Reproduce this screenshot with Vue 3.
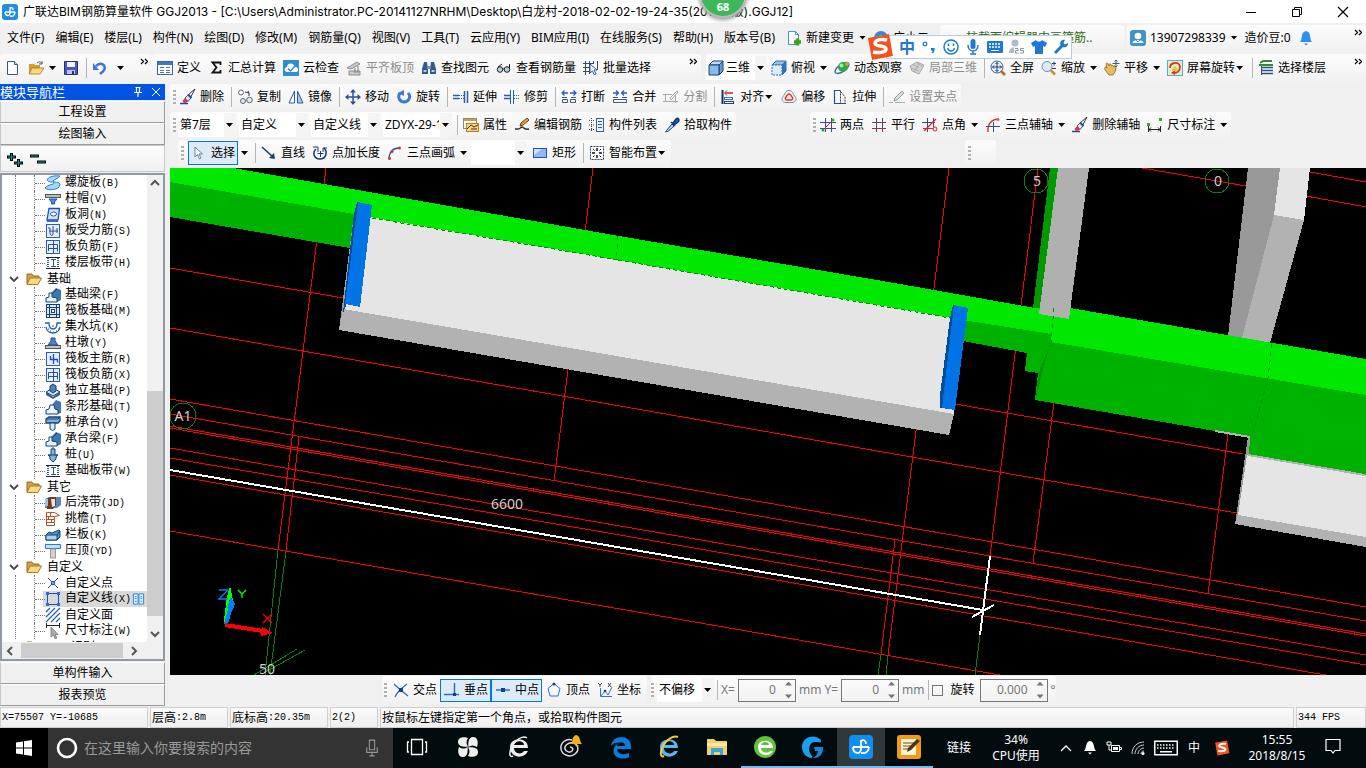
<template>
  <div class="app">
    <header class="titlebar">
      <svg class="ico" viewBox="0 0 16 16" v-html="icons.app"></svg>
      <h1 class="title">广联达BIM钢筋算量软件 GGJ2013 - [C:\Users\Administrator.PC-20141127NRHM\Desktop\白龙村-2018-02-02-19-24-35(2018新版).GGJ12]</h1>
      <div class="window-buttons">
        <button v-for="b in ['minimize', 'restore', 'close']" :key="b" :aria-label="b">
          <svg class="ico" viewBox="0 0 16 16" v-html="icons[b]"></svg>
        </button>
      </div>
      <div class="speed-ball">68</div>
    </header>

    <nav class="menubar">
      <button v-for="m in menus" :key="m" class="menu">{{ m }}</button>
      <button class="tool menu-new">
        <svg class="ico" viewBox="0 0 16 16" v-html="icons.newChange"></svg>新建变更<i class="caret"></i>
      </button>
      <button class="tool menu-helper">
        <svg class="ico" viewBox="0 0 16 16" v-html="icons.helper"></svg>广小二
      </button>
      <a class="strip menu-tip" href="#">柱截面编辑器中画箍筋..</a>
      <div class="strip menu-account">
        <button class="tool"><svg class="ico" viewBox="0 0 16 16" v-html="icons.user"></svg>13907298339<i class="caret"></i></button>
        <button class="tool">造价豆:0</button>
        <button class="tool" aria-label="消息"><svg class="ico" viewBox="0 0 16 16" v-html="icons.bell"></svg></button>
        <svg class="more" viewBox="0 0 8 7" v-html="icons.more"></svg>
      </div>

      <!-- Input method bar floats over the menu -->
      <div class="ime">
        <svg class="ime-logo" viewBox="0 0 28 28" v-html="icons.sogou"></svg>
        <div class="ime-keys">
          <span class="ime-zh">中</span>
          <svg v-for="k in imeIcons" :key="k" class="ime-ico" viewBox="0 0 16 16" v-html="icons[k]"></svg>
        </div>
      </div>
    </nav>

    <div class="main-tools">
      <div v-for="(strip, s) in mainStrips" :key="s" class="strip" :class="strip.cls">
        <template v-for="(t, i) in strip.items" :key="i">
          <span v-if="t.sep" class="sep"></span>
          <label v-else-if="t.combo !== undefined" class="combo" :class="t.cls">
            <svg v-if="t.icon" class="ico" viewBox="0 0 16 16" v-html="icons[t.icon]"></svg>
            <select :aria-label="t.name"><option>{{ t.combo }}</option></select>
          </label>
          <button v-else class="tool" :class="{ wide: t.wide }" :disabled="t.off" :aria-label="t.name">
            <svg class="ico" viewBox="0 0 16 16" v-html="icons[t.icon]"></svg>{{ t.label }}<i v-if="t.caret" class="caret" :class="{ tight: t.tight }"></i>
          </button>
        </template>
        <svg class="more" viewBox="0 0 8 7" v-html="icons.more"></svg>
      </div>
    </div>

    <div class="body">
      <aside class="sidebar">
        <div class="dock-title">
          <span>模块导航栏</span>
          <svg class="dock-ico" viewBox="0 0 12 12" v-html="icons.pin"></svg>
          <svg class="dock-ico" viewBox="0 0 12 12" v-html="icons.dockClose"></svg>
        </div>
        <button class="module">工程设置</button>
        <button class="module">绘图输入</button>
        <div class="tree-tools">
          <button aria-label="展开"><svg class="ico" viewBox="0 0 16 16" v-html="icons.expand"></svg></button>
          <button aria-label="折叠"><svg class="ico" viewBox="0 0 16 16" v-html="icons.collapse"></svg></button>
        </div>
        <div class="tree-box">
          <div class="tree-view">
            <ul class="tree">
              <li v-for="(b, n) in tree" :key="n">
                <div v-if="b.label" class="branch">
                  <svg class="chev" viewBox="0 0 10 10"><path d="M1 3l4 4 4-4" fill="none" stroke="#444" stroke-width="1.8" /></svg>
                  <svg class="ico" viewBox="0 0 16 16" v-html="icons.folder"></svg>
                  <span>{{ b.label }}</span>
                </div>
                <ul class="leaves">
                  <li v-for="l in b.items" :key="l[1]" class="leaf" :class="{ on: l[3] }">
                    <svg class="ico" viewBox="0 0 16 16" v-html="icons[l[0]]"></svg>
                    <span class="leaf-name">{{ l[1] }}<span v-if="l[2]" class="mono">({{ l[2] }})</span></span>
                    <svg v-if="l[3]" class="leaf-flag" viewBox="0 0 14 14" v-html="icons.book"></svg>
                  </li>
                </ul>
              </li>
            </ul>
            <div class="vscroll">
              <svg viewBox="0 0 10 10"><path d="M1 7l4-4 4 4" fill="none" stroke="#555" stroke-width="2" /></svg>
              <div class="vtrack"><div class="vthumb"></div></div>
              <svg viewBox="0 0 10 10"><path d="M1 3l4 4 4-4" fill="none" stroke="#555" stroke-width="2" /></svg>
            </div>
          </div>
          <div class="hscroll">
            <svg viewBox="0 0 10 10"><path d="M7 1L3 5l4 4" fill="none" stroke="#555" stroke-width="2" /></svg>
            <div class="hthumb"></div>
            <svg viewBox="0 0 10 10"><path d="M3 1l4 4-4 4" fill="none" stroke="#555" stroke-width="2" /></svg>
          </div>
        </div>
        <button class="module">单构件输入</button>
        <button class="module">报表预览</button>
      </aside>

      <main class="work">
        <div v-for="(row, r) in editRows" :key="r" class="edit-row">
          <div v-for="(strip, s) in row" :key="s" class="strip" :class="strip.cls">
            <span class="grip"></span>
            <template v-for="(t, i) in strip.items" :key="i">
              <span v-if="t.sep" class="sep"></span>
              <label v-else-if="t.combo !== undefined" class="combo" :class="t.cls">
                <select :aria-label="t.name"><option>{{ t.combo }}</option></select>
              </label>
              <button v-else class="tool" :class="{ on: t.on }" :disabled="t.off" :aria-label="t.name">
                <svg v-if="t.icon" class="ico" viewBox="0 0 16 16" v-html="icons[t.icon]"></svg>{{ t.label }}<i v-if="t.caret" class="caret" :class="{ tight: t.tight }"></i>
              </button>
            </template>
          </div>
        </div>

        <svg class="viewport" viewBox="170 168 1196 507" preserveAspectRatio="xMinYMin slice" shape-rendering="crispEdges">
          <rect x="170" y="168" width="2400" height="1200" fill="#000" />
          <g stroke="#f00" fill="none">
            <path v-for="l in axisLines" :key="l" :d="l" />
          </g>
          <g stroke="#0a800a" fill="none">
            <path d="M278 550L265 675M286 551L270 675M881 654L878 675M888 655L886 675M980 635L975 675" />
            <path d="M254 675L297 649M262 674L305 650" />
            <circle cx="183" cy="416" r="13" /><circle cx="1036" cy="181" r="12" /><circle cx="1217" cy="181" r="12" />
          </g>
          <polygon v-for="(f, i) in faces" :key="i" :points="f[1]" :fill="f[0]" />
          <path d="M372 218L618 260M618 260L950 318" stroke="#0a8a0a" stroke-dasharray="4 3" fill="none" />
          <path d="M618 236L616 260M1054 308L1051 342M1272 344L1268 378L1252 436" stroke="#0a8a0a" stroke-dasharray="4 4" fill="none" />
          <path d="M1215 431L1250 437M1248 455L1365 475" stroke="#b2b2b2" stroke-width="2" fill="none" />
          <g stroke="#fff" stroke-width="2" fill="none">
            <path d="M170 470L983 610M990 556L980 635M972 617L994 605" />
          </g>
          <g class="axis-text">
            <text x="183" y="421">A1</text>
            <text x="1037" y="186">5</text>
            <text x="1218" y="186">0</text>
            <text x="507" y="509">6600</text>
            <text x="267" y="674">50</text>
          </g>
          <!-- Coordinate gizmo -->
          <path d="M225 624L228 600" stroke="#0f0" stroke-width="3" />
          <path d="M226 600L230 586L233 600z" fill="#0f0" />
          <path d="M226 624L231 606" stroke="#0080ff" stroke-width="4" />
          <path d="M227 608L231 597L235 604L233 610z" fill="#0080ff" />
          <path d="M225 625L263 631" stroke="#f00" stroke-width="4" />
          <path d="M262 627L273 633L261 636z" fill="#f00" />
          <g fill="none" stroke-width="1.4" shape-rendering="auto">
            <path d="M219 590h9l-9 9h9" stroke="#0080ff" />
            <path d="M238 590l4 4 4-4M242 594v4" stroke="#0f0" />
            <path d="M263 614l9 9M272 614l-9 9" stroke="#f00" />
          </g>
        </svg>

        <div class="snap-row">
          <div class="strip snap-strip">
            <span class="grip"></span>
            <button v-for="t in snaps" :key="t.label" class="tool snap" :class="{ on: t.on }">
              <svg class="ico" viewBox="0 0 16 16" v-html="icons[t.icon]"></svg>{{ t.label }}
            </button>
          </div>
          <div class="strip offset-strip">
            <span class="grip"></span>
            <label class="combo w-offset"><select aria-label="偏移方式"><option>不偏移</option></select></label>
            <span class="sep"></span>
            <label for="off-x">X=</label>
            <span class="spin"><input id="off-x" value="0" disabled><i class="spin-arrows"></i></span>
            <span class="unit">mm</span>
            <label for="off-y">Y=</label>
            <span class="spin"><input id="off-y" value="0" disabled><i class="spin-arrows"></i></span>
            <span class="unit">mm</span>
            <span class="sep"></span>
            <input id="rotate" type="checkbox" class="check">
            <label for="rotate" class="rotate-label">旋转</label>
            <span class="spin spin-wide"><input aria-label="旋转角度" value="0.000" disabled><i class="spin-arrows"></i></span>
            <span class="unit">°</span>
          </div>
        </div>
      </main>
    </div>

    <footer class="status">
      <div v-for="c in statusCells" :key="c.text" class="cell" :class="c.cls">
        <span v-for="(run, i) in runs(c.text)" :key="i" :class="{ mono: run.ascii }">{{ run.text }}</span>
      </div>
    </footer>

    <div class="taskbar">
      <button class="start" aria-label="开始"><svg class="task-ico" viewBox="0 0 24 24" v-html="icons.windows"></svg></button>
      <label class="search">
        <svg class="task-ico" viewBox="0 0 24 24"><circle cx="12" cy="12" r="9" fill="none" stroke="#fff" stroke-width="2.6" /></svg>
        <input type="text" placeholder="在这里输入你要搜索的内容">
        <svg class="mic" viewBox="0 0 16 20"><path d="M5 1h6v11H5zM2 9v6h12V9M8 15v4M5 19h6" fill="none" stroke="#999" stroke-width="1.2" /></svg>
      </label>
      <button v-for="t in tasks" :key="t.icon" class="task" :class="t.cls" :aria-label="t.icon">
        <svg class="task-ico" viewBox="0 0 24 24" v-html="icons[t.icon]"></svg>
      </button>
      <span class="links">链接</span>
      <span class="cpu">34%<br>CPU使用</span>
      <div class="tray">
        <svg v-for="t in trayIcons" :key="t" class="tray-ico" :class="t" viewBox="0 0 16 16" v-html="icons[t]"></svg>
      </div>
      <span class="ime-state">中</span>
      <svg class="tray-ico" viewBox="0 0 28 28" v-html="icons.sogou"></svg>
      <time class="clock">15:55<br>2018/8/15</time>
      <button class="notice" aria-label="通知"><svg class="ico" viewBox="0 0 16 16" v-html="icons.notice"></svg></button>
    </div>
  </div>
</template>

<script setup>
const menus = [
  '文件(F)', '编辑(E)', '楼层(L)', '构件(N)', '绘图(D)', '修改(M)', '钢筋量(Q)', '视图(V)',
  '工具(T)', '云应用(Y)', 'BIM应用(I)', '在线服务(S)', '帮助(H)', '版本号(B)',
]

const imeIcons = ['punct', 'smile', 'imeMic', 'imeKeys', 'imeUser', 'shirt', 'wrench']

const mainStrips = [
  { cls: 'strip-file', items: [
    { icon: 'newFile', name: '新建' },
    { icon: 'open', name: '打开', caret: true },
    { icon: 'save', name: '保存' },
    { sep: true },
    { icon: 'undo', name: '撤销', caret: true, wide: true },
  ] },
  { cls: 'strip-calc', items: [
    { icon: 'define', label: '定义' },
    { icon: 'sigma', label: '汇总计算' },
    { icon: 'cloud', label: '云检查' },
    { icon: 'alignTop', label: '平齐板顶', off: true },
    { icon: 'find', label: '查找图元' },
    { icon: 'glasses', label: '查看钢筋量' },
    { icon: 'batch', label: '批量选择' },
  ] },
  { cls: 'strip-view', items: [
    { icon: 'cube', combo: '三维', cls: 'w-view', name: '视图模式' },
    { icon: 'topView', label: '俯视', caret: true },
    { icon: 'orbit', label: '动态观察' },
    { icon: 'part3d', label: '局部三维', off: true },
    { sep: true },
    { icon: 'fit', label: '全屏' },
    { icon: 'zoom', label: '缩放', caret: true },
    { icon: 'pan', label: '平移', caret: true },
    { icon: 'rotateView', label: '屏幕旋转', caret: true, tight: true },
    { sep: true },
    { icon: 'floors', label: '选择楼层' },
  ] },
]

const editRows = [
  [
    { items: [
      { icon: 'erase', label: '删除' }, { sep: true },
      { icon: 'copy', label: '复制' },
      { icon: 'mirror', label: '镜像' }, { sep: true },
      { icon: 'move', label: '移动' },
      { icon: 'rotate', label: '旋转' }, { sep: true },
      { icon: 'extend', label: '延伸' },
      { icon: 'trim', label: '修剪' }, { sep: true },
      { icon: 'breakLine', label: '打断' },
      { icon: 'merge', label: '合并' },
      { icon: 'split', label: '分割', off: true }, { sep: true },
      { icon: 'align', label: '对齐', caret: true, tight: true },
      { icon: 'offset', label: '偏移' },
      { icon: 'stretch', label: '拉伸' }, { sep: true },
      { icon: 'grips', label: '设置夹点', off: true },
    ] },
  ],
  [
    { cls: 'strip-combos', items: [
      { combo: '第7层', cls: 'w-floor', name: '楼层' },
      { combo: '自定义', cls: 'w-kind', name: '构件类别' },
      { combo: '自定义线', cls: 'w-kind', name: '构件类型' },
      { combo: 'ZDYX-29-1', cls: 'w-kind', name: '构件' }, { sep: true },
      { icon: 'props', label: '属性' },
      { icon: 'editBar', label: '编辑钢筋' },
      { icon: 'list', label: '构件列表' },
      { icon: 'dropper', label: '拾取构件' },
    ] },
    { cls: 'strip-axis', items: [
      { icon: 'twoPoint', label: '两点' },
      { icon: 'parallel', label: '平行' },
      { icon: 'angle', label: '点角', caret: true },
      { icon: 'arcAxis', label: '三点辅轴', caret: true },
      { icon: 'erase', label: '删除辅轴' },
      { icon: 'dimension', label: '尺寸标注', caret: true },
    ] },
  ],
  [
    { cls: 'strip-draw', items: [
      { icon: 'cursor', label: '选择', on: true },
      { name: '选择方式', caret: true }, { sep: true },
      { icon: 'line', label: '直线' },
      { icon: 'pointLen', label: '点加长度' },
      { icon: 'arc', label: '三点画弧', caret: true },
      { combo: '', cls: 'w-arc', name: '圆弧方式' },
      { icon: 'rect', label: '矩形' }, { sep: true },
      { icon: 'smart', label: '智能布置', caret: true, tight: true },
    ] },
    { cls: 'strip-empty', items: [] },
  ],
]

const snaps = [
  { icon: 'snapCross', label: '交点' },
  { icon: 'snapPerp', label: '垂点', on: true },
  { icon: 'snapMid', label: '中点', on: true },
  { icon: 'snapVertex', label: '顶点' },
  { icon: 'snapCoord', label: '坐标' },
]

// icon, name, shortcut, selected
const tree = [
  { items: [
    ['spiral', '螺旋板', 'B'], ['cap', '柱帽', 'V'], ['hole', '板洞', 'N'],
    ['slabBar', '板受力筋', 'S'], ['slabNeg', '板负筋', 'F'], ['band', '楼层板带', 'H'],
  ] },
  { label: '基础', items: [
    ['beam', '基础梁', 'F'], ['raft', '筏板基础', 'M'], ['sump', '集水坑', 'K'],
    ['pier', '柱墩', 'Y'], ['raftMain', '筏板主筋', 'R'], ['slabNeg', '筏板负筋', 'X'],
    ['footing', '独立基础', 'P'], ['strip', '条形基础', 'T'], ['pileCap', '桩承台', 'V'],
    ['beam', '承台梁', 'F'], ['pile', '桩', 'U'], ['band', '基础板带', 'W'],
  ] },
  { label: '其它', items: [
    ['pour', '后浇带', 'JD'], ['eave', '挑檐', 'T'], ['railing', '栏板', 'K'], ['coping', '压顶', 'YD'],
  ] },
  { label: '自定义', items: [
    ['customPoint', '自定义点', ''], ['customLine', '自定义线', 'X', true],
    ['customFace', '自定义面', ''], ['treeDim', '尺寸标注', 'W'],
  ] },
  { label: 'CAD识别', items: [] },
]

const statusCells = [
  { text: 'X=75507 Y=-10685', cls: 'w-coord' },
  { text: '层高:2.8m', cls: 'w-height' },
  { text: '底标高:20.35m', cls: 'w-base' },
  { text: '2(2)', cls: 'w-count' },
  { text: '按鼠标左键指定第一个角点，或拾取构件图元', cls: 'w-hint' },
  { text: '344 FPS', cls: 'w-fps' },
]

function runs(text) {
  return text.split(/([\x20-\x7e]+)/).filter(Boolean).map(t => ({ text: t, ascii: /^[\x20-\x7e]/.test(t) }))
}

const tasks = [
  { icon: 'taskView', cls: 'loose' }, { icon: 'pinwheel', cls: 'loose' }, { icon: 'ieWhite', cls: 'loose' },
  { icon: 'swirl', cls: 'loose' }, { icon: 'edge', cls: '' }, { icon: 'ie', cls: '' },
  { icon: 'explorer', cls: '' }, { icon: 'ieGreen', cls: 'open' }, { icon: 'glodon', cls: 'open' },
  { icon: 'ggj', cls: 'open active' }, { icon: 'notes', cls: 'open' },
]

const trayIcons = ['trayUp', 'trayBell', 'battery', 'wifi', 'trayKeys']

const axisLines = [
  'M326 168L278 550', 'M299 437L286 551', 'M593 168L554 481', 'M949 168L888 655', 'M895 540L881 654',
  'M1038 168L990 556', 'M1054 402L1033 563', 'M1228 434L1208 594',
  'M170 268L343 298', 'M955 404L1243 454', 'M170 328L620 406L900 455L1237 513',
  'M170 399L900 526L1366 607', 'M170 414L620 492L1100 575L1366 621',
  'M170 426L620 504L1100 588L1366 634', 'M170 428L620 506L1100 590L1366 636',
  'M170 448L620 526L1100 609L1366 655', 'M170 458L620 535L1100 619L1366 665',
  'M170 475L620 553L1100 636L1366 682', 'M170 531L620 609L1000 675',
  'M1142 168L1246 186', 'M1310 172L1366 182', 'M1306 196L1366 207',
]

// Faces are painted back to front
const faces = [
  ['#009a00', '1050,168 1058,168 1040,314 1033,308'],
  ['#999', '1248,168 1280,168 1275,215 1243,338 1228,336'],
  ['#e5e5e5', '1280,168 1310,168 1304,220 1274,215'],
  ['#b2b2b2', '1274,215 1304,220 1270,343 1242,338'],
  ['#00b200', '170,182 354,214 350,248 170,217'],
  ['#00e800', '170,168 233,168 619,236 900,284 1035,308 1070,308 1366,359 1366,395 1051,342 1051,334 950,318 618,260 372,218 354,214 170,182'],
  ['#b0b0b0', '1058,168 1089,168 1069,319 1039,314'],
  ['#00b200', '963,320 1051,334 1051,342 1038,373 1025,371 1027,353 963,341'],
  ['#00b200', '1051,342 1366,395 1366,475 1248,455 1250,437 1035,400 1038,372'],
  ['#009a00', '1048,350 1051,342 1041,377 1036,400 1038,373'],
  ['#999', '1248,437 1250,437 1249,455 1247,455 1238,515 1235,524'],
  ['#e5e5e5', '1247,455 1366,475 1366,537 1238,515'],
  ['#b2b2b2', '1238,515 1366,537 1366,547 1235,524'],
  ['#999', '354,214 358,214 344,309 339,330'],
  ['#e5e5e5', '370,217 953,318 954,414 343,309 346,304 360,306'],
  ['#b2b2b2', '343,309 954,414 949,435 339,330'],
  ['#004f9e', '357,202 360,202 346,306 343,313 354,214'],
  ['#0073e6', '358,202 372,205 360,307 345,304'],
  ['#004f9e', '953,305 956,306 943,408 940,408 940,395 950,318'],
  ['#0073e6', '954,305 968,308 955,410 942,408'],
]

const blue = '#2b5fa8'
const gridFrame = '<rect x="1.5" y="1.5" width="13" height="13" fill="#e6f0ff" stroke="#2a5bc4"/>'

const icons = {
  app: '<rect width="16" height="16" rx="3" fill="#1e8fe0"/><path d="M3 8h10M8 3v6c0 4-5 3-5-1M8 12c3 1 5-1 5-4M8 4c2-1 3 0 3 2" fill="none" stroke="#fff" stroke-width="1.4"/>',
  minimize: '<path d="M3 8.5h10" stroke="#000"/>',
  restore: '<path d="M3.5 5.5h7v7h-7zM5.5 5.5v-2h7v7h-2" fill="none" stroke="#000"/>',
  close: '<path d="M3 3l10 10M13 3L3 13" stroke="#000" stroke-width="1.2"/>',
  more: '<path d="M1 1l2.5 2.5L1 6M5 1l2.5 2.5L5 6" fill="none" stroke="#000" stroke-width="1.3"/>',
  newChange: '<path d="M2.5 1.5h7l3 3v10h-10z" fill="#f4faff" stroke="#4a95b8"/><path d="M9.5 1.5v3h3" fill="none" stroke="#4a95b8"/><path d="M8 12h7M11.5 8.5v7" stroke="#3ba30f" stroke-width="3.5"/>',
  helper: '<circle cx="8" cy="8" r="7" fill="#2f8be0"/><circle cx="8" cy="10" r="4.5" fill="#fff"/>',
  user: '<rect width="16" height="16" rx="3" fill="#3d95c9"/><circle cx="8" cy="6" r="3.3" fill="#fff"/><path d="M2.5 13c0-4 11-4 11 0z" fill="#fff"/><path d="M6 10l2 2 2-2" stroke="#3d95c9" fill="none"/>',
  bell: '<path d="M8 1c-6 1-3 8-6 11h12C11 9 14 2 8 1z" fill="#2f8ff5"/><path d="M6 13.5h4l-2 2z" fill="#2f8ff5"/>',
  sogou: '<path d="M2 5l21-4 4 22-21 4z" fill="#f4511e"/><path d="M21 7c-3-1-11-1-12 3-.5 4 11 2 11 6 0 4-9 4-13 3" fill="none" stroke="#fff" stroke-width="3.5"/>',
  punct: '<circle cx="4" cy="5" r="1.8" fill="none" stroke="#1f78d1" stroke-width="1.3"/><path d="M10 9h3.5c.5 3-.5 5-2.5 5.5l-.5-1c1-.5 1-1 1-2H10z" fill="#1f78d1"/>',
  smile: '<circle cx="8" cy="8" r="7" fill="none" stroke="#1f78d1" stroke-width="1.5"/><path d="M4.5 9c1 4 6 4 7 0" fill="none" stroke="#1f78d1" stroke-width="1.3"/><path d="M5.5 4.5V7M10.5 4.5V7" stroke="#1f78d1" stroke-width="1.5"/>',
  imeMic: '<rect x="5.5" y="0" width="5" height="10" rx="2.5" fill="#1f78d1"/><path d="M3 6c0 8 10 8 10 0M8 12v3M5 15h6" fill="none" stroke="#1f78d1" stroke-width="1.5"/>',
  imeKeys: '<rect y="2" width="16" height="12" rx="1" fill="#1f78d1"/><path d="M2 5h12M2 8h12" stroke="#fff" stroke-width="1.5" stroke-dasharray="2 1"/><path d="M4 11.5h8" stroke="#fff"/>',
  imeUser: '<circle cx="6" cy="4" r="3.5" fill="#aebac8"/><path d="M0 14c0-7 10-8 12-2v2z" fill="#aebac8"/><rect x="5" y="8" width="11" height="7" fill="#fff"/><path d="M6 9.5h3v2H6.5V14h3M15 9.5h-3.5v2h3V14H11" fill="none" stroke="#8796a8"/>',
  shirt: '<path d="M5 1c1 2 5 2 6 0l5 3-2 4-2-1v8H4V7L2 8 0 4z" fill="#1f78d1"/>',
  wrench: '<path d="M2 14l7-7" stroke="#1f78d1" stroke-width="3"/><path d="M15 4l-3 1.5L10.5 4 12 1C8 0 6 4 8 7c3 3 8 0 7-3z" fill="#1f78d1"/>',

  newFile: '<path d="M2.5 1.5h7l3 3v10h-10z" fill="#fff" stroke="#36577c"/><path d="M9.5 1.5v3h3" fill="#cfe0f2" stroke="#36577c"/>',
  open: '<path d="M1 4h5l1 1h5v3H4L1 14z" fill="#d89b2b"/><path d="M4 8h12l-4 6H1z" fill="#f8d878" stroke="#a5761d" stroke-width=".8"/><path d="M9 3c2-2 4-1 5 1M14 1v3h-3" fill="none" stroke="#4a5e75"/>',
  save: '<path d="M1.5 1.5h13v13h-13z" fill="#4856c8" stroke="#28307e"/><rect x="4" y="2" width="8" height="5" fill="#f4f6ff"/><rect x="4" y="10" width="8" height="4" fill="#bfc6e8"/><rect x="9" y="11" width="2" height="3" fill="#28307e"/>',
  undo: '<path d="M4 6c5-5 11 0 8 4-1 2-3 3-4 4" fill="none" stroke="#3b77d8" stroke-width="2.5"/><path d="M1 3v7h6z" fill="#3b77d8"/>',
  define: '<rect x=".5" y="1.5" width="15" height="13" fill="#fff" stroke="#3a66a8"/><rect x="1" y="2" width="14" height="3" fill="#3f78c8"/><path d="M3 7.5h4M3 10.5h4M3 12.5h4M9 7.5h4M9 10.5h4M9 12.5h4" stroke="#56718f"/>',
  sigma: '<path d="M12.5 5V2.5h-8l4 5-4 5h8V10" fill="none" stroke="#111" stroke-width="1.8"/>',
  cloud: '<rect width="16" height="16" fill="#2d8ed0"/><path d="M4 12c-4-1-2-5 0-5 1-5 7-4 8 0 4 0 4 5 1 5z" fill="#fff"/><path d="M5 8.5L7.5 11 12 6" fill="none" stroke="#2d8ed0" stroke-width="1.5"/>',
  alignTop: '<path d="M1 8l10-6 3 2-9 5zM3 11h11v4H3z" fill="#c9c9c9" stroke="#8f8f8f"/><path d="M9 8v5M12 6v7" stroke="#777"/>',
  find: '<path d="M3 2h3l1 7v5H1V9zM10 2h3l2 7v5H9V9z" fill="#33598a"/><path d="M6 6h4v3H6z" fill="#6f93bb"/><path d="M2.5 11h3M10.5 11h3" stroke="#b7cce6" stroke-width="2"/>',
  glasses: '<circle cx="4" cy="9.5" r="2.8" fill="#b8ccd8" stroke="#222"/><circle cx="11" cy="9.5" r="2.8" fill="#b8ccd8" stroke="#222"/><path d="M6.5 9h2M2 7l4-3M13.5 9V4" fill="none" stroke="#222"/>',
  batch: '<path d="M2.5 1v14M0 3.5h10M0 7.5h6M0 11.5h6" stroke="#34495e"/><path d="M6.5 1v13M10.5 1v3M14.5 1v9" stroke="#34495e"/><path d="M7 4l7 6h-3l2 4-2 .5L9.5 11 7 13z" fill="#fff" stroke="#2d5f9e"/>',
  cube: '<path d="M1 5l4-4h10l-4 4z" fill="#bcdcf7" stroke="#1f3f6d"/><path d="M11 5l4-4v10l-4 4z" fill="#5f9bd4" stroke="#1f3f6d"/><path d="M1 5h10v10H1z" fill="#86bdec" stroke="#1f3f6d"/>',
  topView: '<path d="M1 5l4-4h10l-4 4z" fill="#8ec5f5" stroke="#3b6fa8"/><path d="M11 5l4-4v10l-4 4z" fill="#2f74c8" stroke="#3b6fa8"/><path d="M1 5h10v10H1z" fill="#dcecfb" stroke="#3b6fa8" stroke-dasharray="2 1"/>',
  orbit: '<ellipse cx="8" cy="8" rx="8" ry="3.5" transform="rotate(-35 8 8)" fill="none" stroke="#3e6f9c" stroke-width="1.5"/><circle cx="9" cy="7" r="5" fill="#2fa64a"/><circle cx="7.5" cy="5.5" r="2" fill="#a5e8a5"/><circle cx="13" cy="4" r="2" fill="#c9a42c"/>',
  part3d: '<path d="M1 6l7-4 7 3-5 9-7-3z" fill="#d4d4d4" stroke="#aaa"/><path d="M4 4.5l6 3M8 2.5l5 4M5 12l5-8M2 8l8 3" stroke="#aaa" fill="none"/>',
  fit: '<circle cx="7" cy="7" r="6" fill="#e8f1fb" stroke="#3c5f8a"/><path d="M7 2.5v9M2.5 7h9M5.5 4L7 2.5 8.5 4M5.5 10L7 11.5 8.5 10M4 5.5L2.5 7 4 8.5M10 5.5L11.5 7 10 8.5" fill="none" stroke="#1f3f7a"/><path d="M11 11l4 4" stroke="#b56a2a" stroke-width="2.5"/>',
  zoom: '<circle cx="6" cy="6.5" r="5" fill="#dcebf9" stroke="#708aa8"/><path d="M9.5 10l4.5 4.5" stroke="#c8902e" stroke-width="2.5"/><path d="M11 3.5h4M13 1.5v4M11 8.5h4" stroke="#1f3f7a"/>',
  pan: '<path d="M1 10c-1-3 1-4 2-2l-1-4c1-2 2-1 3 2 0-3 2-3 2.500 0 1-1 2-1 2.500 1 1-1 2 0 2 1l-1 4-2 3H5z" fill="#e8bd5c" stroke="#8a6420" stroke-width=".8"/><path d="M12 0v7M8.500 3.500h7M10.500 1.500L12 0l1.500 1.500M10.500 5.500L12 7l1.500-1.500" stroke="#455a78" fill="none"/>',
  rotateView: '<rect x=".5" y=".5" width="15" height="15" fill="#dff0c8" stroke="#58a8d8"/><path d="M3 8c0-6 9-7 10-1 0 4-3 6-6 6" fill="none" stroke="#e0342b" stroke-width="1.8"/><path d="M8 10v5l-4-2z" fill="#e0342b"/><path d="M5 9l3-3 3 3v2H5z" fill="#e6c93b"/>',
  floors: '<path d="M2 3l3-2h9M1 5h14" stroke="#2f8a3a" stroke-width="2" fill="none"/><path d="M4 7.5h11M4 10.5h11M4 13.5h11" stroke="#2c4f86" stroke-width="1.5"/><path d="M3.5 6v9" stroke="#2c4f86"/>',

  erase: '<path d="M0 14.5h8" stroke="#2a4a8a" stroke-width="1.5"/><path d="M15 0L8 6l2.5 2.5z" fill="#fff" stroke="#333"/><path d="M8 6L5 9l3 3.5L11 9z" fill="#dfe3ea" stroke="#555"/><path d="M5 9l-2.5 3c1 2.500 3 2.500 5.500.5z" fill="#c8395a"/><path d="M8 5.5L11.5 9" stroke="#2a4a8a" stroke-width="2"/>',
  copy: '<circle cx="4" cy="3.5" r="2.5" fill="#fff" stroke="#667"/><circle cx="6" cy="12" r="2.5" fill="#dfe8f4" stroke="#667"/><circle cx="12.5" cy="11" r="2.8" fill="#dfe8f4" stroke="#667"/><path d="M8 3l4 1-1-2M12 4v3" fill="none" stroke="#334"/>',
  mirror: '<path d="M6.5 2v12H1z" fill="#fff" stroke="#2f5f9e"/><path d="M9.5 2v12H15z" fill="#a9c6ea" stroke="#2f5f9e"/>',
  move: '<path d="M8 2v12M2 8h12" stroke="#2d5391" stroke-width="1.5"/><path d="M8 0l3 3.5H5zM8 16l3-3.5H5zM0 8l3.5-3v6zM16 8l-3.5-3v6z" fill="#2d5391"/>',
  rotate: '<path d="M4 4c-3 4 0 9 4 9s8-5 4-9" fill="none" stroke="#3f78cf" stroke-width="3"/><path d="M8 1v6L2 4z" fill="#3f78cf"/>',
  extend: `<path d="M14.5 2v12M11.5 2v12" stroke="${blue}" stroke-width="1.5"/><path d="M0 6.5h6M0 9.5h6" stroke="${blue}" stroke-width="1.5"/><path d="M6 6.5h6M6 9.5h6" stroke="${blue}" stroke-dasharray="1 1"/>`,
  trim: `<path d="M6.5 1v14M9.5 1v14" stroke="${blue}"/><path d="M0 6.5h7M0 9.5h7" stroke="${blue}" stroke-width="1.5"/><path d="M10 6.5h6M10 9.5h6" stroke="${blue}" stroke-dasharray="1 1"/>`,
  breakLine: '<path d="M1 4h6M9 4h6M3.5 1.5L1 4l2.5 2.5M12.5 1.5L15 4l-2.5 2.5" stroke="#2d5fae" stroke-width="1.3" fill="none"/><path d="M1 8.5h5M10 8.5h5M1.5 10.5h5v3h-5zM9.5 10.5h5v3h-5z" stroke="#455a78" fill="none"/>',
  merge: '<path d="M1 4h5M10 4h5M4 1.5L6.5 4 4 6.5M12 1.5L9.5 4 12 6.5" stroke="#2d5fae" stroke-width="1.3" fill="none"/><path d="M1 8.5h5M10 8.5h5M1.5 10.5h13v3h-13z" stroke="#455a78" fill="none"/>',
  split: '<path d="M0 5.5h9M0 12.5h15M2.5 5v8M7 9l7-7 1 1-7 8zM12.5 6v8" fill="none" stroke="#a9a9a9"/>',
  align: '<path d="M2.5 1v14" stroke="#16306b" stroke-width="2"/><path d="M5 4h8" stroke="#c02828" stroke-width="1.5"/><path d="M7 1.5L4.5 4 7 6.5" stroke="#c02828" fill="none"/><rect x="4.5" y="8.5" width="8" height="2" fill="#fff" stroke="#3a70c0"/><rect x="4.5" y="12.5" width="9" height="2" fill="#fff" stroke="#1f3f8a"/>',
  offset: '<path d="M8 1.5c4 0 4 4 6 6s1 6-3 6H5c-4 0-5-4-3-6s2-6 6-6z" fill="#eef2f8" stroke="#7a8ba3"/><path d="M8 5c2 0 2 2 3 3s1 3-1 3H6c-2 0-2-2-1-3s1-3 3-3z" fill="#fbe6e0" stroke="#cf3c28" stroke-width="1.5"/>',
  stretch: '<path d="M8 1.5H2.5v13H14" fill="none" stroke="#2a4a8a" stroke-width="1.2"/><path d="M8.5 1.5v13M9 3l4 5v6" fill="none" stroke="#334" stroke-dasharray="2 1"/>',
  grips: '<path d="M0 13.5h4M6 13.5h10" stroke="#aaa"/><path d="M5 12l1-3 7-7 2 2-7 7z" fill="#ddd" stroke="#999"/>',

  props: '<rect x=".5" y="1.5" width="13" height="10" fill="#fff" stroke="#888"/><path d="M1 2h12v2H1z" fill="#c9a04a"/><rect x="3.5" y="6.5" width="12" height="8" fill="#ffd27a" stroke="#c27c14"/><path d="M4 12l4-4 3 2 4-2M8 12h6" stroke="#334" fill="none"/>',
  editBar: '<path d="M1 12h3c3 0 2-2 4-2s1 3 7 2" fill="none" stroke="#333" stroke-width="1.5"/><path d="M6 9l1-3 6-5 2 2-6 5z" fill="#d9a441" stroke="#7a3a12"/>',
  list: '<path d="M2.5 1v14M0 3.5h5M0 8h5M0 12.5h5" stroke="#445" stroke-dasharray="1 1"/><rect x="7.5" y="1.5" width="7" height="13" fill="#eef5ff" stroke="#2d5fae"/><path d="M9 4.5h4M9 7.5h4M9 10.5h4" stroke="#2d5fae"/>',
  dropper: '<path d="M2.5 13.5L8 7l2 2-5.5 5-3 1z" fill="#b9d8f8" stroke="#1c3f82"/><path d="M7 5l4 4M9 6l3-4c2-2 4 1 2 3l-4 3z" fill="#1d58b4" stroke="#14397b" stroke-width="1.5"/>',
  twoPoint: '<path d="M5.5 1v14M11.5 1v14M0 5.5h16M0 11.5h16" stroke="#33508a"/><path d="M2 14L14 2" stroke="#c22"/><circle cx="3" cy="13" r="1.5" fill="#2a2"/><circle cx="13" cy="3" r="1.5" fill="#2a2"/>',
  parallel: '<path d="M5.5 1v14M11.5 1v14" stroke="#33508a"/><path d="M1 5.5h14M1 11.5h14" stroke="#933"/>',
  angle: '<path d="M5.5 1v14M11.5 1v9M0 5.5h13" stroke="#33508a"/><path d="M2 14L14 2M1 11.5h10" stroke="#d22" stroke-width="1.2"/><circle cx="13" cy="12" r="2" fill="none" stroke="#d22"/>',
  arcAxis: '<path d="M3 15C2 7 7 2 14 2" fill="none" stroke="#d22" stroke-width="1.3"/><path d="M1 9.5h14M8.5 5v10" stroke="#33508a"/><circle cx="13" cy="2.5" r="1.5" fill="#d66"/>',
  dimension: '<path d="M1.5 9v6M13.5 9v6M1 12.5h13M4 10.5l-2 2 2 2M11 10.5l2 2-2 2" stroke="#222" fill="none"/><rect x="0" y="6" width="3" height="3" fill="#3a3"/><rect x="12" y="1" width="3" height="3" fill="#3a3"/>',

  cursor: '<path d="M4 2v10l2.5-2.5L8.5 14l1.5-1-2-4h3.5z" fill="#fff" stroke="#6c7f94"/>',
  line: '<path d="M1 2l11 10" stroke="#1e3a78" stroke-width="1.6"/><path d="M14 14l-6-1 5-5z" fill="#1e3a78"/>',
  pointLen: '<path d="M4 4c-4 4-2 10 4 10s8-7 4-11" fill="none" stroke="#1e3a78" stroke-width="1.6"/><path d="M1 2h5v5M15 3h-4v4M8.5 6v6M5.5 8.5h6" stroke="#1e3a78" fill="none"/>',
  arc: '<path d="M2 14C2 7 6 3 12 3" fill="none" stroke="#2a4a9a" stroke-width="1.3"/><circle cx="2.5" cy="13.5" r="1.5" fill="#c33"/><circle cx="5" cy="6.5" r="1.5" fill="#c33"/><circle cx="12.5" cy="3" r="1.5" fill="#c33"/>',
  rect: '<rect x="1.5" y="3.5" width="13" height="9" fill="#8fb8f5" stroke="#1f4fc0"/><path d="M2 4h8l-8 6z" fill="#d3e4fd"/>',
  smart: '<rect x="1.5" y="1.5" width="13" height="13" fill="#fff" stroke="#2a3f66" stroke-dasharray="2 1"/><path d="M8 3v3M8 10v3M3 8h3M10 8h3" stroke="#111" stroke-width="1.5"/><path d="M4 4l1.5 1.5M12 4l-1.5 1.5M4 12l1.5-1.5M12 12l-1.5-1.5" stroke="#111"/>',

  snapCross: '<path d="M1 2c4 4 9 8 14 12M14 2C10 5 4 10 2 15" fill="none" stroke="#2f6fd0" stroke-width="1.3"/><rect x="6" y="6" width="4" height="4" fill="#15408f"/>',
  snapPerp: '<path d="M10.5 1v12M0 12.5h15" stroke="#2f6fd0" stroke-width="1.5"/><rect x="9" y="11" width="3" height="3" fill="#15408f"/>',
  snapMid: '<path d="M1 8h14" stroke="#2f6fd0" stroke-width="1.5"/><rect x="6" y="6" width="4" height="4" fill="#15408f"/>',
  snapVertex: '<path d="M8 1.5l6 5-2 7.5H4L2 6.5z" fill="#f4f9ff" stroke="#2f6fd0"/><circle cx="8" cy="2" r="1.5" fill="#15408f"/>',
  snapCoord: '<path d="M3.5 6v8.5H15M4 14l4-5 3 4 4-8" fill="none" stroke="#2f6fd0"/><path d="M1 1l2 2 2-2M3 3v2M11 1l3 4M14 1l-3 4" stroke="#445" fill="none"/><circle cx="8" cy="9" r="1.3" fill="#15408f"/>',

  pin: '<path d="M3.5 1.5h5M4.5 1.5v5M7.5 1.5v5M2 6.5h8M6 7v4" stroke="#fff" fill="none" stroke-width="1.2"/>',
  dockClose: '<path d="M2 2l8 8M10 2l-8 8" stroke="#fff"/>',
  expand: '<path d="M0 5h9M4.5 1v8M7 11h9M11.5 7v8" stroke="#000" stroke-width="3"/><path d="M1 5h7M4.5 2v6M8 11h7M11.5 8v6" stroke="#0fa08c"/>',
  collapse: '<path d="M0 4h9M7 10h9" stroke="#000" stroke-width="3"/><path d="M1 4h7M8 10h7" stroke="#0fa08c"/>',
  folder: '<path d="M1 13V3h5l1 2h6v3" fill="#d5a143" stroke="#8f6a1e"/><path d="M1 13.5L4 7h11.5L12 13.5z" fill="#fbdc85" stroke="#a27a28"/>',
  book: '<path d="M1.5 1.5h5v11h-5zM7.5 1.5h5v11h-5z" fill="#e8f6ff" stroke="#1b84d8"/><path d="M3 4.5h2M3 6.5h2M3 9.5h2M9 4.5h2M9 6.5h2M9 9.5h2" stroke="#1b84d8"/>',

  spiral: '<path d="M15 1C8 0 0 3 3 6c2 2 6 0 6 2s-6 1-9 5c4 3 14 2 15-3 0-4-7-2-7-4 1-2 5-2 7-5z" fill="#9fd8f8" stroke="#2a7bd0"/>',
  cap: '<rect x=".5" y="3.5" width="15" height="3" fill="#bdbdbd" stroke="#555"/><path d="M4 8h8l-2.5 3v2h-3v-2z" fill="#4f8ae0" stroke="#1f4fa8"/>',
  hole: '<path d="M4 1.5h10.5L13 13H2z" fill="#cfe4ff" stroke="#1d4dc0" stroke-width="1.3"/><path d="M2 13h11v2H2z" fill="#3568d4"/><ellipse cx="8.5" cy="7" rx="3" ry="2" fill="#fff" stroke="#1d4dc0"/>',
  slabBar: gridFrame + '<path d="M8 3v8c0 2-3 2-3-1M3 5h2v5M4 8h9M12 5v5" fill="none" stroke="#2a4f96"/>',
  slabNeg: gridFrame + '<path d="M8.5 2v12M3.5 12V5.5h9v7M3 9.5h10" fill="none" stroke="#2a4f96"/>',
  band: '<path d="M1 2.5h14M1 13.5h14" stroke="#222"/><path d="M3 3v10M13 3v10" stroke="#2a5bc4" stroke-width="2" stroke-dasharray="1 1"/><path d="M6 4.5h5M6 11.5h5M8.5 5v6" stroke="#2a4f96"/>',
  beam: '<path d="M6 6l5-5 5 2v10l-4 2-6-3z" fill="#3f78b0"/><path d="M7 7l5-5" stroke="#17406e"/><path d="M1 15v-4l3-1V6h3v4l5 1v4z" fill="#e8f3ff" stroke="#17406e"/>',
  strip: '<path d="M7 6l4-5 5 2v11l-4 1z" fill="#3f78b0"/><path d="M1 15v-4l3-1 1-4h4l1 4 3 1v4z" fill="#e8f3ff" stroke="#17406e"/>',
  raft: '<rect x="1.5" y="1.5" width="13" height="13" fill="#d7e7fb" stroke="#17406e"/><path d="M4.5 1v14M11.5 1v14M1 4.5h14M1 11.5h14" stroke="#17406e"/><rect x="6.5" y="6.5" width="3" height="3" fill="#fff" stroke="#17406e"/>',
  sump: '<path d="M0 4h4c0 8 8 8 8 0h4M1 8c1 8 13 8 14 0" fill="none" stroke="#1d5fb8" stroke-width="1.3"/><path d="M3 10h1M5 12h1M8 13h1M11 12h1M13 10h1M7 7h2" stroke="#1d5fb8"/>',
  pier: '<rect x=".5" y="10.5" width="15" height="3" fill="#c4c4c4" stroke="#555"/><path d="M3 10l3-4V3h4v3l3 4z" fill="#4f7fc4" stroke="#1f4f96"/>',
  raftMain: gridFrame + '<path d="M8.5 3v10M5.5 5v3.5h7v3" fill="none" stroke="#1d4dc0" stroke-width="1.3"/>',
  footing: '<path d="M1 9l7 5 7-5v3l-7 4-7-4z" fill="#2e5f95"/><path d="M1 9l7-4 7 4-7 4z" fill="#cfe4f7" stroke="#17406e"/><path d="M5 3l3-2 3 2v5l-3 2-3-2z" fill="#4d82bd" stroke="#17406e"/>',
  pileCap: '<path d="M1 4l3-2h11v4l-2 2H1z" fill="#7db2e8" stroke="#17406e" stroke-width="1.3"/><path d="M1 4h12M13 4l2-2" stroke="#17406e"/><path d="M5 8h5v6l-2.5 1.5L5 14z" fill="#d8e9f9" stroke="#17406e"/>',
  pile: '<path d="M6 2h4v6h3l-2 2v2l-3 3-3-3v-2L3 8h3z" fill="#7fb4e8" stroke="#17406e"/><path d="M7 1h2M3 8h10" stroke="#17406e"/>',
  pour: '<path d="M0 4l4-2h12v8l-4 3H0z" fill="#5a86b8"/><path d="M2 4l3-2h6v8l-3 4H2z" fill="#6b3b22"/><path d="M6 4h4v7l-3 1z" fill="#f0e4dc"/><path d="M0 4h3v7H0z" fill="#a8c0dc"/>',
  eave: '<path d="M1.5 1.5h8l5 3-5 1v9h-8z" fill="#fff" stroke="#b5532a"/><path d="M1 5.5h8M1 8.5h8M1 11.5h8M5.5 2v3M3.5 6v3M6.5 9v3" stroke="#b5532a"/>',
  railing: '<path d="M1 8l3-3 3 1 7-3 1 1v6l-3 3H1z" fill="#4e93cc" stroke="#17406e"/><path d="M1 8h11v5H1z" fill="#a9d3f2" stroke="#17406e"/><path d="M12 8l3-4" stroke="#17406e"/>',
  coping: '<path d="M.5 1.5h15v4H.5z" fill="#bfe0fa" stroke="#2a7bd0"/><rect x="5.5" y="6" width="5" height="9" fill="#d0d0d0" stroke="#999"/>',
  customPoint: '<path d="M3 3l10 10M13 3L3 13" stroke="#2a4f96"/><rect x="6.5" y="6.5" width="3" height="3" fill="#5fb4f5" stroke="#1d4dc0"/>',
  customLine: '<rect x="2.5" y="2.5" width="11" height="11" fill="none" stroke="#1d4dc0"/><path d="M1 1h3v3H1zM12 1h3v3h-3zM1 12h3v3H1zM12 12h3v3h-3z" fill="#2a6be0"/>',
  customFace: '<path d="M1 5l4-4M1 10l9-9M1 15L15 1M6 15l9-9M11 15l4-4" stroke="#2a5bc4" stroke-width="1.2"/>',
  treeDim: '<path d="M1.5 0v5M14.5 0v5M1 2.5h14" stroke="#222"/><path d="M6 4v10l2.5-2 1.5 4 2-1-2-3.5h3z" fill="#aaa" stroke="#777" stroke-width=".8"/>',

  windows: '<path d="M4 6.5l7-1v6H4zM12 5.3L20 4v7.5h-8zM4 12.5h7v6l-7-1zM12 12.5h8V20l-8-1.3z" fill="#fff"/>',
  taskView: '<path d="M6.5 4.5h11v15h-11zM4 7H2.5v10H4M20 7h1.5v10H20" fill="none" stroke="#fff" stroke-width="1.3"/>',
  pinwheel: '<path d="M12 11.5C9 12 2 12 2 7c0-6 8-5 10-4-2 3-2 6 0 8.5zM12.500 12C12 9 12 2 17 2c6 0 5 8 4 10-3-2-6-2-8.500 0zM12 12.500c3-.5 10-.5 10 4.500 0 6-8 5-10 4 2-3 2-6 0-8.500zM11.500 12c.5 3 .5 10-4.500 10-6 0-5-8-4-10 3 2 6 2 8.500 0z" fill="#eee"/>',
  ieWhite: '<path d="M21 13H7c0 6 8 7 10 3h4c-4 9-18 7-18-4C3 2 21 1 21 13zM7 10h10c0-5-9-5-10 0z" fill="#eee"/><path d="M20 3c-4-3-12 2-15 8s-3 12 1 10" fill="none" stroke="#eee" stroke-width="1.5"/>',
  swirl: '<path d="M14 5C8 3 2 8 3 14s9 9 14 5 3-10-2-11-9 3-8 6 5 4 7 2 0-4-2-4" fill="none" stroke="#ddd" stroke-width="1.5"/><path d="M18 0c-4 1-3 6-5 9h11c-3-3-1-8-6-9zM17 10h4l-2 2z" fill="#f5b014"/>',
  edge: '<path d="M2 11C3 0 21-2 22 11v3H8c0 6 8 6 12 4v4C13 26 2 22 5 13c1-3 4-5 7-5-5-1-8 0-10 3zM8 11h8c0-5-7-5-8 0z" fill="#0a7cdb"/>',
  ie: '<path d="M21 13H7c0 6 8 7 10 3h4c-4 9-18 7-18-4C3 2 21 1 21 13zM7 10h10c0-5-9-5-10 0z" fill="#58b8f2"/><path d="M21 2c-5-2-12 3-15 9s-3 12 1 10" fill="none" stroke="#f7c935" stroke-width="2"/>',
  explorer: '<path d="M2 4h7l2 2h11v14H2z" fill="#f6cf65"/><path d="M2 8h20v3H2z" fill="#fde7a2"/><path d="M6 13h12v7h-3v-3H9v3H6z" fill="#39a5dc"/>',
  ieGreen: '<circle cx="12" cy="12" r="11" fill="#62c23c"/><path d="M20 13H8c0 5 7 6 9 3h3c-4 7-15 5-15-4C5 4 20 3 20 13zM8 10h8c0-4-7-4-8 0z" fill="#fff"/>',
  glodon: '<path d="M20 5C13-2 1 2 1 12c0 6 4 10 9 11 1 0 2-1 1-2-5-5-3-14 3-14 3 0 5 1 6 0z" fill="#1a9ff0"/><path d="M13 12h9c1 6-4 12-10 11 3-2 5-4 5-7h-3z" fill="#0e88e0"/>',
  ggj: '<rect width="24" height="24" rx="4" fill="#108ef0"/><path d="M4 12h16M12 5v9c0 6-8 5-8-2M12 18c5 1 8-2 8-6M12 6c3-2 5 0 5 3" fill="none" stroke="#fff" stroke-width="1.8"/>',
  notes: '<rect width="24" height="24" rx="3" fill="#f59a16"/><path d="M4 4h15v16H4z" fill="#fff3d6"/><path d="M6 8h11M6 11h9M6 14h6" stroke="#7a4a12"/><path d="M10 17l1-4 9-9 3 2-9 9z" fill="#4a3520"/>',
  trayUp: '<path d="M3 11l5-5 5 5" fill="none" stroke="#fff" stroke-width="1.3"/>',
  trayBell: '<path d="M8 1c-5 1-3 7-6 10h12c-3-3-1-9-6-10zM6 12.5h4l-2 2z" fill="#fff"/>',
  battery: '<path d="M5.5 5.5h8v6h-8zM14 7.5h1.5v2H14" fill="none" stroke="#fff"/><path d="M7 7h5v3H7z" fill="#fff"/><path d="M1 2v3h4V2M3 5v5h2M2 1v2M4 1v2" fill="none" stroke="#fff"/>',
  wifi: '<path d="M2 14C2 7 7 2 14 2M5 14c0-5 4-9 9-9M8 14c0-3 3-6 6-6M11 14c0-2 1-3 3-3" fill="none" stroke="#ccc"/><circle cx="13" cy="13.5" r="1.5" fill="#fff"/>',
  trayKeys: '<rect x=".5" y="3.5" width="15" height="9" fill="none" stroke="#fff"/><path d="M2 6h12M2 8h12" stroke="#fff" stroke-dasharray="1 1"/><path d="M4 10.5h8" stroke="#fff"/>',
  notice: '<path d="M1 1.5h14v11h-5L8 15l-2-2.5H1z" fill="none" stroke="#fff" stroke-width="1.2"/>',
}
</script>

<style>
body {
  background: #f0f0f0;
}
</style>

<style scoped>
* {
  box-sizing: border-box;
}

.app {
  display: flex;
  flex-direction: column;
  height: 100vh;
  overflow: hidden;
  background: #f0f0f0;
  color: #000;
  font: 12px/16px 'Noto Sans', 'Noto Sans CJK SC', sans-serif;
}

button,
select,
input {
  font: inherit;
  color: inherit;
}

button {
  padding: 0;
  border: 0;
  background: none;
}

ul {
  margin: 0;
  padding: 0;
  list-style: none;
}

.ico {
  width: 16px;
  height: 16px;
  flex: none;
}

/* Title */
.titlebar {
  position: relative;
  display: flex;
  flex: none;
  align-items: center;
  gap: 5px;
  height: 23px;
  padding-left: 2px;
  background: #fff;
}

.title {
  flex: 1;
  margin: 0;
  font-family: Inter, 'Noto Sans CJK SC', sans-serif;
  font-size: 12px;
  font-weight: 400;
  white-space: nowrap;
}

.window-buttons {
  display: flex;
}

.window-buttons button {
  display: grid;
  place-items: center;
  width: 46px;
  height: 23px;
}

.speed-ball {
  position: absolute;
  z-index: 3;
  top: -30px;
  left: 699px;
  display: flex;
  align-items: flex-end;
  justify-content: center;
  width: 48px;
  height: 48px;
  padding-bottom: 1px;
  border: 2px solid #b9bdb9;
  border-radius: 50%;
  background: #3cb85a;
  box-shadow: 0 2px 4px #999;
  color: #fff;
  font-size: 11px;
  font-weight: 700;
}

/* Menu */
.menubar {
  position: relative;
  display: flex;
  flex: none;
  align-items: center;
  gap: 11px;
  height: 31px;
  padding: 0 0 2px 7px;
  white-space: nowrap;
}

.strip {
  display: flex;
  align-items: center;
  gap: 7px;
  height: 26px;
  border-radius: 3px;
  background: linear-gradient(#fcfcfc, #f1f1f1);
  white-space: nowrap;
}

.tool {
  display: flex;
  align-items: center;
  gap: 4px;
  height: 24px;
}

.tool:disabled {
  color: #8d8d8d;
}

.caret {
  width: 7px;
  height: 4px;
  margin-left: 1px;
  background: #000;
  clip-path: polygon(0 0, 100% 0, 50% 100%);
}

.caret.tight {
  margin: 0 2px 0 -3px;
}

.menu-helper {
  margin-left: -4px;
}

.menu-tip {
  flex: 1;
  padding-left: 26px;
  overflow: hidden;
  color: #2f6b0a;
  text-decoration: none;
}

.menu-account {
  width: 239px;
  margin-left: -8px;
  padding-left: 3px;
}

.more {
  flex: none;
  align-self: flex-start;
  width: 8px;
  height: 7px;
  margin: 4px 4px 0 auto;
}

.ime {
  position: absolute;
  z-index: 2;
  top: 10px;
  left: 866px;
  display: flex;
  align-items: center;
}

.ime-logo {
  width: 28px;
  height: 28px;
  margin-right: -8px;
  z-index: 1;
}

.ime-keys {
  display: flex;
  align-items: center;
  gap: 6px;
  height: 24px;
  padding: 0 2px 0 12px;
  border: 1px solid #b9cbe0;
  background: #fff;
}

.ime-zh {
  color: #1f78d1;
  font-size: 16px;
  font-weight: 700;
}

.ime-ico {
  width: 16px;
  height: 16px;
}

/* Main toolbar */
.main-tools {
  display: flex;
  flex: none;
  height: 30px;
}

.main-tools .strip {
  height: 28px;
}

.strip-file {
  width: 152px;
  padding-left: 5px;
}

.strip-file .wide .caret {
  margin-left: 5px;
}

.strip-calc {
  width: 549px;
  padding-left: 5px;
}

.strip-view {
  flex: 1;
  margin-left: 5px;
}

.sep {
  width: 1px;
  height: 20px;
  margin-right: -2px;
  background: #b5b5b5;
}

.combo {
  display: flex;
  align-items: center;
  height: 24px;
  padding-right: 3px;
  background: linear-gradient(to left, #f4f4f4 12px, #fff 12px);
}

.combo::after {
  content: '';
  width: 7px;
  height: 4px;
  margin-left: 3px;
  background: #000;
  clip-path: polygon(0 0, 100% 0, 50% 100%);
}

.combo select {
  flex: 1;
  min-width: 0;
  padding: 0 0 0 2px;
  border: 0;
  appearance: none;
  background: none;
}

.w-view {
  width: 61px;
  margin-right: -3px;
  padding-left: 2px;
}

.w-floor {
  width: 58px;
}

.w-kind {
  width: 69px;
}

.w-arc {
  width: 56px;
  margin: 0 -2px 0 -3px;
}

.w-offset {
  width: 57px;
}

/* Sidebar */
.body {
  display: flex;
  flex: 1;
  gap: 5px;
  min-height: 0;
}

.sidebar {
  display: flex;
  flex: none;
  flex-direction: column;
  width: 165px;
  padding-bottom: 1px;
}

.dock-title {
  display: flex;
  align-items: center;
  gap: 6px;
  height: 16px;
  margin-bottom: 1px;
  padding-right: 3px;
  background: #0054e3;
  color: #fff;
  font-size: 13px;
}

.dock-title span {
  flex: 1;
}

.dock-ico {
  width: 12px;
  height: 12px;
}

.module {
  flex: none;
  height: 22px;
  border: 1px solid #9a9a9a;
  border-top-color: #fff;
  border-left-color: #c8c8c8;
}

.tree-tools {
  display: flex;
  flex: none;
  gap: 7px;
  height: 27px;
  padding: 6px;
  border: 1px solid #c8c8c8;
  background: linear-gradient(#fdfdfd, #f0f0f0);
}

.tree-tools button {
  height: 16px;
}

.tree-box {
  display: flex;
  flex: 1;
  flex-direction: column;
  min-height: 0;
  margin: 1px 0;
  border: 2px solid #9298a0;
  background: #fff;
}

.tree-view {
  display: flex;
  flex: 1;
  min-height: 0;
}

.tree {
  flex: 1;
  overflow: hidden;
}

.branch,
.leaf {
  display: flex;
  align-items: center;
  height: 16px;
  white-space: nowrap;
}

.branch {
  gap: 5px;
  padding-left: 7px;
}

.chev {
  width: 10px;
  height: 10px;
  margin-right: 2px;
}

.leaves {
  margin-left: 13px;
  padding-left: 18px;
  border-left: 1px dotted #777;
}

.leaf {
  gap: 4px;
  border-left: 1px dotted #777;
}

.leaf::before {
  content: '';
  width: 10px;
  margin-right: -4px;
  border-top: 1px dotted #777;
}

.leaf.on {
  background: linear-gradient(to right, transparent 8px, #d9d9d9 8px);
}

.leaf-flag {
  width: 13px;
  height: 14px;
  margin-left: -3px;
}

.mono {
  font-family: 'Liberation Mono', monospace;
  font-size: 10px;
}

.vscroll,
.hscroll {
  display: flex;
  flex: none;
  align-items: center;
  background: #f0f0f0;
}

.vscroll {
  flex-direction: column;
  width: 16px;
}

.vscroll svg,
.hscroll svg {
  width: 10px;
  height: 10px;
  margin: 3px;
}

.vtrack {
  display: flex;
  flex: 1;
  align-items: flex-end;
  width: 100%;
  padding-bottom: 10px;
}

.vthumb {
  width: 100%;
  height: 53%;
  background: #cdcdcd;
}

.hscroll {
  height: 17px;
}

.hthumb {
  width: 102px;
  height: 15px;
  margin: 0 3px;
  background: #cdcdcd;
}

/* Work area */
.work {
  display: flex;
  flex: 1;
  flex-direction: column;
  min-width: 0;
}

.edit-row {
  display: flex;
  flex: none;
  height: 28px;
}

.edit-row .strip {
  padding: 0 4px 0 3px;
}

.grip {
  width: 3px;
  height: 15px;
  margin-right: -3px;
  background: repeating-linear-gradient(#b0b0b0 0 2px, transparent 2px 4px);
}

.strip-combos .combo {
  margin: 0 -2px;
}

.edit-row .strip-axis {
  margin-left: 74px;
}

.edit-row .strip-draw {
  margin-left: 8px;
}

.edit-row .strip-empty {
  width: 31px;
  margin-left: 294px;
}

.tool.on {
  margin-right: -5px;
  padding: 0 2px;
  border: 1px solid #0078d7;
  background: #dcebf7;
}

.viewport {
  display: block;
  flex: 1;
  width: 100%;
  min-height: 0;
}

.axis-text {
  fill: #d0d0d0;
  font-size: 14px;
  text-anchor: middle;
}

.snap-row {
  display: flex;
  flex: none;
  gap: 4px;
  height: 32px;
  padding: 1px 0 0 212px;
}

.snap-row .strip {
  height: 28px;
}

.snap-strip {
  gap: 0;
  padding: 0 3px 0 2px;
}

.tool.snap {
  height: 23px;
  margin: 0;
  padding: 0 2px 0 3px;
  border: 1px solid transparent;
}

.tool.snap.on {
  border-color: #0078d7;
}

.snap-strip .grip {
  margin: 0 2px 0 0;
}

.offset-strip {
  gap: 3px;
  color: #777;
}

.offset-strip .grip {
  margin-right: 0;
}

.offset-strip .combo,
.rotate-label {
  color: #000;
}

.offset-strip .sep {
  margin: 0;
}

.rotate-label {
  margin: 0 2px 0 5px;
}

.spin {
  display: flex;
  align-items: center;
  width: 58px;
  height: 23px;
  border: 1px solid #777;
}

.spin-wide {
  width: 68px;
}

.spin input {
  flex: 1;
  min-width: 0;
  padding: 0 9px 0 0;
  border: 0;
  background: none;
  color: #777;
  text-align: right;
}

.spin-arrows {
  width: 7px;
  height: 17px;
  margin-right: 3px;
  background: #777;
  clip-path: polygon(0 4px, 50% 0, 100% 4px, 0 4px, 0 13px, 100% 13px, 50% 100%, 0 13px);
}

.check {
  width: 11px;
  height: 11px;
  margin: 0;
  border: 1px solid #777;
  appearance: none;
}

/* Status */
.status {
  display: flex;
  flex: none;
  gap: 2px;
  height: 21px;
}

.cell {
  display: flex;
  align-items: center;
  padding-left: 1px;
  border: 1px solid #cfcfcf;
  background: linear-gradient(#fafafa, #efefef);
  white-space: nowrap;
}

.w-coord {
  width: 148px;
}

.w-height {
  width: 78px;
}

.w-base {
  width: 98px;
}

.w-count {
  width: 48px;
}

.w-hint {
  flex: 1;
}

.w-fps {
  width: 70px;
}

/* Taskbar */
.taskbar {
  display: flex;
  flex: none;
  align-items: center;
  height: 40px;
  background: #020b0e;
  color: #fff;
  text-align: center;
  white-space: nowrap;
}

.task-ico {
  width: 24px;
  height: 24px;
}

.start {
  display: grid;
  place-items: center;
  width: 48px;
  height: 40px;
  background: #000;
}

.search {
  display: flex;
  align-items: center;
  gap: 5px;
  width: 345px;
  height: 40px;
  padding: 0 14px 0 7px;
  background: #333;
}

.search input {
  flex: 1;
  min-width: 0;
  padding: 0;
  border: 0;
  outline: 0;
  background: none;
  font-size: 14px;
}

.search input::placeholder {
  color: #999;
  opacity: 1;
}

.mic {
  width: 14px;
  height: 18px;
}

.task {
  display: grid;
  place-items: center;
  width: 48px;
  height: 40px;
  border-bottom: 2px solid transparent;
}

.task.loose {
  width: 51px;
  padding-right: 3px;
}

.task.open {
  border-bottom-color: #76b9ed;
}

.task.active {
  background: #30383a;
}

.links {
  margin-left: 14px;
}

.cpu {
  width: 50px;
  margin-left: 20px;
}

.tray {
  display: flex;
  align-items: center;
  gap: 8px;
  margin-left: auto;
}

.tray-ico {
  width: 16px;
  height: 16px;
}

.trayKeys {
  width: 24px;
  height: 24px;
}

.ime-state {
  margin: 0 14px 0 10px;
}

.clock {
  width: 62px;
  margin-left: 16px;
}

.notice {
  margin: 0 25px 0 17px;
}
</style>
